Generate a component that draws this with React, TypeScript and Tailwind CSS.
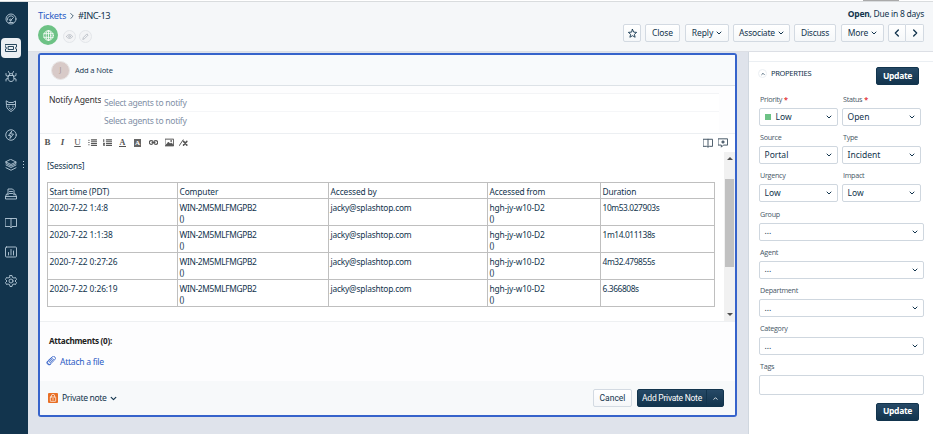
import React from "react";

type SvgProps = { children: React.ReactNode; className?: string; sw?: number };

function Ico({ children, className = "size-3", sw = 2 }: SvgProps) {
  return (
    <svg viewBox="0 0 24 24" fill="none" stroke="currentColor" strokeWidth={sw} strokeLinecap="round" strokeLinejoin="round" className={`block shrink-0 ${className}`}>
      {children}
    </svg>
  );
}

function Chevron({ className = "size-[7px]", up = false }: { className?: string; up?: boolean }) {
  return (
    <Ico className={className} sw={4}>
      <path d={up ? "M4 16l8-8 8 8" : "M4 8l8 8 8-8"} />
    </Ico>
  );
}

const navIcons: React.ReactNode[] = [
  <><circle cx="12" cy="12" r="10" /><path d="M5 14a7 7 0 0 1 11-7M12 14l5-5M11 16a2 2 0 1 0 0-4 2 2 0 0 0 0 4M8 19h8" /></>,
  <><path d="M1 5h22v5a2 2 0 0 0 0 4v5H1v-5a2 2 0 0 0 0-4z" /><path d="M7 9h10v6H7z" /></>,
  <><path d="M7 9h10l1 6c0 4-3 6-6 6s-6-2-6-6zM8 9a4 4 0 0 1 8 0M9 5L7 1M15 5l2-4M7 11L2 9V5M17 11l5-2V5M6 15l-4 1v4M18 15l4 1v4" /></>,
  <><path d="M3 2l5 3h8l5-3v10c0 5-4 8-9 11-5-3-9-6-9-11z" /><path d="M4 9h16M8 12v2M16 12v2M9 17l3 2 3-2" /></>,
  <><circle cx="12" cy="12" r="10.5" /><path d="M13 5l-6 8h4l-1 6 7-9h-5z" /></>,
  <><path d="M12 1l10 5-10 5L2 6z" /><path d="M2 12l10 5 10-5M2 17.500l10 5 10-5M2 6v3l10 5 10-5V6" /></>,
  <><path d="M6 14V2h9l3 3v9M9 7h6M9 11h6M6 12H3l-2 6v4h22v-4l-2-6h-3M1 17h22" /></>,
  <><path d="M1 3h22v16h-9l-2 3-2-3H1zM12 3v16" /></>,
  <><rect x="1" y="2" width="22" height="20" rx="2" /><path d="M7 18v-5M12 18V7M17 18v-8" /></>,
  <><path d="M10 1h4l1 4 3 1 3-1 2 4-3 3 3 3-2 4-3-1-3 1-1 4h-4l-1-4-3-1-3 1-2-4 3-3-3-3 2-4 3 1 3-1z" /><circle cx="12" cy="12" r="4" /></>,
];

function Sidebar() {
  return (
    <nav className="flex w-7 shrink-0 flex-col bg-[#12344d] pt-[2.500px] text-[#b8cbd9]">
      {navIcons.map((icon, i) => (
        <div key={i} className="flex h-[29.100px] w-full shrink-0 items-center pl-[1px]">
          <span className={i === 1 ? "flex size-5 items-center justify-center rounded-[4px] bg-[#ebeff3] text-[#12344d]" : "flex size-5 items-center justify-center"}>
            <Ico className="size-[12px]" sw={1.8}>{icon}</Ico>
          </span>
          {i === 5 && (
            <span className="ml-[2px] flex flex-col gap-[2px]">
              <i className="size-px bg-[#b8cbd9]" /><i className="size-px bg-[#b8cbd9]" /><i className="size-px bg-[#b8cbd9]" />
            </span>
          )}
        </div>
      ))}
    </nav>
  );
}

const btn = "flex h-[18px] shrink-0 items-center justify-center rounded-[2px] border border-[#d3dae2] bg-gradient-to-b from-white to-[#f5f7f9]";

function Header() {
  return (
    <header className="flex h-[50px] shrink-0 justify-between border-b border-[#dcdfe5] bg-[#f5f7f9] pl-[10px] pr-[9px]">
      <div>
        <div className="mt-[7.500px] flex h-3 items-center text-[9.300px]">
          <span className="tracking-[-0.280px] text-[#2c5cc5]">Tickets</span>
          <Ico className="ml-[3px] mr-[3px] size-[6px]" sw={3}><path d="M7 2l10 10L7 22" /></Ico>
          <span className="tracking-[-0.550px]">#INC-13</span>
        </div>
        <div className="mt-[3.500px] flex items-center">
          <span className="flex size-5 items-center justify-center rounded-full bg-[#6dc285] text-white">
            <Ico className="size-[11px]" sw={1.8}><circle cx="12" cy="12" r="10.500" /><ellipse cx="12" cy="12" rx="5" ry="10.500" /><path d="M12 1v22M2 8h20M2 16h20" /></Ico>
          </span>
          <span className="ml-[5px] mt-[2px] flex size-[13px] items-center justify-center rounded-full border border-[#e3e6ea] bg-[#f3f4f6] text-[#b9bec6]">
            <Ico className="size-[7px]" sw={3}><path d="M1 12q11-14 22 0-11 14-22 0z" /><circle cx="12" cy="12" r="3" /></Ico>
          </span>
          <span className="ml-[3px] mt-[2px] flex size-[13px] items-center justify-center rounded-full border border-[#e3e6ea] bg-[#f3f4f6] text-[#b9bec6]">
            <Ico className="size-[7px]" sw={3}><path d="M3 21l2-6L17 3l4 4L9 19z" /></Ico>
          </span>
        </div>
      </div>
      <div className="flex flex-col items-end">
        <div className="mt-[6px] h-3 text-[8.500px] leading-3 tracking-[-0.240px]"><b>Open</b>, Due in 8 days</div>
        <div className="mt-[4px] flex text-[8.500px] tracking-[-0.100px]">
          <span className={`${btn} w-[18px]`}>
            <Ico className="size-[9px]" sw={2.4}><path d="M12 1l3.200 7.300 7.800.7-6 5.200 2 7.800-7-4.200L5 22l2-7.800L1 9l7.800-.7z" /></Ico>
          </span>
          <span className={`${btn} ml-[4px] w-[35px]`}>Close</span>
          <span className={`${btn} ml-[5px] w-[44px] gap-[3px]`}>Reply<Chevron className="size-[6px]" /></span>
          <span className={`${btn} ml-[4px] w-[57px] gap-[3px] tracking-[-0.200px]`}>Associate<Chevron className="size-[6px]" /></span>
          <span className={`${btn} ml-[4px] w-[42px] tracking-[-0.300px]`}>Discuss</span>
          <span className={`${btn} ml-[5px] w-[43px] gap-[3px]`}>More<Chevron className="size-[6px]" /></span>
          <span className={`${btn} ml-[4px] w-[18px] rounded-r-none`}><Ico className="size-[8px]" sw={4}><path d="M16 3l-9 9 9 9" /></Ico></span>
          <span className={`${btn} w-[18px] rounded-l-none border-l-0`}><Ico className="size-[8px]" sw={4}><path d="M8 3l9 9-9 9" /></Ico></span>
        </div>
      </div>
    </header>
  );
}

const list = <path d="M9 5h14M9 10h14M9 15h14M9 20h14" />;

function Toolbar() {
  return (
    <div className="flex h-[19px] items-center border-t border-[#eceff2] bg-white pb-px text-[#555]">
      <div className="flex items-center font-['Liberation_Serif',serif] text-[9px] leading-none">
        <span className="w-[15px] text-center font-bold">B</span>
        <span className="w-[15px] text-center font-bold italic">I</span>
        <span className="w-[15px] text-center underline">U</span>
        <span className="flex w-[15px] justify-center"><Ico className="size-[9px]" sw={2.8}>{list}<path d="M2 6h1M2 12h1M2 18h1" /></Ico></span>
        <span className="flex w-[15px] justify-center"><Ico className="size-[9px]" sw={2.8}>{list}<path d="M2 4v5M1 14h3l-3 5h3" /></Ico></span>
        <span className="flex w-[15px] justify-center"><span className="border-b border-[#555] px-px text-[8px] leading-[7px] font-bold">A</span></span>
        <span className="flex w-[15px] justify-center"><span className="bg-[#666] px-px text-[7px] leading-[8px] font-bold text-white">A</span></span>
        <span className="flex w-[17px] justify-center"><Ico className="size-[9px]" sw={3}><circle cx="6" cy="12" r="5" /><circle cx="18" cy="12" r="5" /><path d="M8 12h8" /></Ico></span>
        <span className="flex w-[14px] justify-center"><Ico className="size-[9px]" sw={2.600}><rect x="1" y="3" width="22" height="18" /><path d="M3 19l6-8 5 5 3-3 5 6z" fill="currentColor" /><circle cx="16" cy="8" r="1" /></Ico></span>
        <span className="flex w-[15px] justify-center"><Ico className="size-[9px]" sw={2.6}><path d="M1 20L11 5" /><path d="M12 9l9 10M21 9l-9 10" strokeWidth="4" /></Ico></span>
      </div>
      <div className="ml-auto flex gap-[5px] pr-[7px] text-[#475867]">
        <Ico className="size-[10px]" sw={2.4}><path d="M1 3h22v17h-8l-3 2-3-2H1zM12 3v18" /></Ico>
        <Ico className="size-[10px]" sw={2.400}><path d="M1 2h22v15H13l-5 5v-5H1z" /><path d="M12 7v5M9.500 9.500h5" strokeWidth="3.500" /></Ico>
      </div>
    </div>
  );
}

const rows = [
  ["2020-7-22 1:4:8", "10m53.027903s"],
  ["2020-7-22 1:1:38", "1m14.011138s"],
  ["2020-7-22 0:27:26", "4m32.479855s"],
  ["2020-7-22 0:26:19", "6.366808s"],
];
const cell = "border border-[#bfbfbf] pl-[1.500px] pt-[2.500px] align-top";

function Editor() {
  return (
    <div className="flex h-[169px] bg-white">
      <div className="min-w-0 flex-1 pl-[7px] text-[8.400px] leading-[11px]">
        <div className="mt-[8px] tracking-[-0.200px]">[Sessions]</div>
        <table className="mt-[11px] w-[667px] table-fixed border-collapse">
          <colgroup>
            <col className="w-[130px]" /><col className="w-[151px]" /><col className="w-[159px]" /><col className="w-[113px]" /><col className="w-[114px]" />
          </colgroup>
          <tbody>
            <tr className="h-[16px]">
              {["Start time (PDT)", "Computer", "Accessed by", "Accessed from", "Duration"].map((h) => <td key={h} className={`${cell} tracking-[-0.120px]`}>{h}</td>)}
            </tr>
            {rows.map(([time, duration]) => (
              <tr key={time} className="h-[27px]">
                <td className={`${cell} tracking-[-0.100px]`}>{time}</td>
                <td className={`${cell} tracking-[-0.350px]`}>WIN-2M5MLFMGPB2<br />()</td>
                <td className={`${cell} tracking-[-0.200px]`}>jacky@splashtop.com</td>
                <td className={`${cell} tracking-[-0.150px]`}>hgh-jy-w10-D2<br />()</td>
                <td className={`${cell} tracking-[-0.400px]`}>{duration}</td>
              </tr>
            ))}
          </tbody>
        </table>
      </div>
      <div className="flex w-[11px] shrink-0 flex-col items-center bg-[#f1f1f1]">
        <i className="mt-[5px] border-x-[3px] border-b-[3px] border-x-transparent border-b-[#505050]" />
        <i className="mt-[19px] h-[88px] w-[9px] bg-[#c1c1c1]" />
        <i className="mt-auto mb-[5px] border-x-[3px] border-t-[3px] border-x-transparent border-t-[#505050]" />
      </div>
    </div>
  );
}

function NotePanel() {
  return (
    <section className="mt-[1px] ml-[10px] flex h-[364px] w-[699px] flex-col overflow-hidden rounded-[3px] border-2 border-[#3663cb] bg-[#fdfdfe]">
      <div className="flex h-[31px] shrink-0 items-center border-b border-[#dde2e7] bg-[#f8fafc] pl-[11px]">
        <span className="flex size-[19px] items-center justify-center rounded-full border border-[#e8e6e6] bg-[#d8cac8] text-[7px] text-[#a39392]">J</span>
        <span className="mt-[2px] ml-[5px] font-['Open_Sans','Noto_Sans',sans-serif] text-[7.600px] font-medium tracking-[-0.180px]">Add a Note</span>
      </div>
      <div className="flex h-[47px] shrink-0 pt-[7px] text-[8.600px]">
        <span className="w-[61px] shrink-0 pt-[1px] pl-[9px] tracking-[-0.180px] whitespace-nowrap text-[#333]">Notify Agents</span>
        <div className="mr-[16px] flex-1 border-t border-[#f3f4f6] bg-white pl-[3px] leading-[18px] tracking-[-0.300px] text-[#7f8fa6]">
          <div className="h-[18px] border-b border-[#f5f6f8]">Select agents to notify</div>
          <div>Select agents to notify</div>
        </div>
      </div>
      <Toolbar />
      <Editor />
      <div className="h-[60px] shrink-0 border-t border-[#eef0f2] pl-[7px]">
        <div className="mt-[13px] ml-[2px] text-[8.200px] leading-3 font-bold tracking-[-0.300px] text-[#222]">Attachments (0):</div>
        <div className="mt-[9px] flex h-3 items-center text-[8.600px] text-[#2c5cc5]">
          <Ico className="mt-[-3px] ml-[-1px] size-[10px]" sw={2}><path d="M13 5l-8 8a4 4 0 0 0 6 6L21 9a4 4 0 0 0-6-7L4 12a5 5 0 0 0 7 8M16 6l-8 8 2 2 8-8" /></Ico>
          <span className="ml-[4px] tracking-[-0.280px]">Attach a file</span>
        </div>
      </div>
      <div className="flex flex-1 items-center bg-[#f7f9fa] pr-[11px] pl-[8px] text-[8.600px]">
        <span className="flex size-[10px] items-center justify-center rounded-[1px] bg-[#e86f25] text-white">
          <Ico className="size-[8px]" sw={2}><rect x="4" y="9" width="16" height="13" rx="1" /><path d="M7 9V6a5 5 0 0 1 10 0v3M12 13v5" /></Ico>
        </span>
        <span className="ml-[4px] mr-[3px] tracking-[-0.350px]">Private note</span>
        <Chevron />
        <span className={`${btn} ml-auto w-[39px] font-[Roboto,sans-serif] text-[8.500px]`}>Cancel</span>
        <span className="ml-[5px] flex h-[18px] w-[87px] items-center rounded-[2px] border border-[#12344d] bg-gradient-to-b from-[#264966] to-[#12344d] font-[Roboto,sans-serif] text-[8.500px] text-white">
          <span className="flex h-full w-[69px] items-center justify-center border-r border-[#12344d] tracking-[-0.250px] whitespace-nowrap">Add Private Note</span>
          <span className="flex flex-1 justify-center"><Chevron up className="size-[5px]" /></span>
        </span>
      </div>
    </section>
  );
}

function Field({ label, value, required = false, dot = false, wide = false }: { label: string; value?: string; required?: boolean; dot?: boolean; wide?: boolean }) {
  return (
    <label className={`block h-[38.200px] ${wide ? "w-[165px]" : "w-[79px]"}`}>
      <span className="ml-[1px] block h-[13px] font-['Open_Sans','Noto_Sans',sans-serif] text-[7.200px] leading-[9px] tracking-[-0.280px] text-[#475867]">
        {label}{required && <span className="ml-[2px] font-bold text-[#e43538]">*</span>}
      </span>
      <span className={`flex items-center rounded-[2px] border border-[#cfd7df] bg-white pr-[5px] pl-[4.500px] text-[8.500px] ${value ? "h-[18px]" : "h-[20px]"}`}>
        {dot && <i className="mr-[5px] size-[6px] bg-[#6dc285]" />}
        {value}
        {value && <Chevron className="ml-auto size-[6px]" />}
      </span>
    </label>
  );
}

function UpdateButton() {
  return <span className="flex h-[18px] w-[43px] items-center justify-center rounded-[2px] border border-[#12344d] bg-gradient-to-b from-[#264966] to-[#12344d] text-[8.500px] font-bold tracking-[-0.300px] text-white">Update</span>;
}

function Properties() {
  return (
    <aside className="flex w-[185px] shrink-0 flex-col border-l border-[#d0d7df] bg-white">
      <div className="h-[10px] shrink-0 border-b border-[#ebeff3]" />
      <div className="mt-[4.500px] flex h-[19px] shrink-0 items-center pl-[9px]">
        <span className="mt-[-5px] flex size-[9px] items-center justify-center rounded-full border border-[#ebeff3]"><Chevron up className="size-[4px]" /></span>
        <span className="mt-[-5px] ml-[4px] text-[7.500px] tracking-[-0.320px]">PROPERTIES</span>
        <span className="ml-auto mr-[14px]"><UpdateButton /></span>
      </div>
      <div className="mt-[9.500px] flex w-[175px] flex-wrap gap-x-[4px] pl-[10px]">
        <Field label="Priority" value="Low" required dot />
        <Field label="Status" value="Open" required />
        <Field label="Source" value="Portal" />
        <Field label="Type" value="Incident" />
        <Field label="Urgency" value="Low" />
        <Field label="Impact" value="Low" />
        <Field label="Group" value="..." wide />
        <Field label="Agent" value="..." wide />
        <Field label="Department" value="..." wide />
        <Field label="Category" value="..." wide />
        <Field label="Tags" wide />
      </div>
      <div className="mt-[2px] mr-[14px] flex justify-end"><UpdateButton /></div>
    </aside>
  );
}

export default function App() {
  return (
    <div className="flex h-[435px] w-[933px] flex-col overflow-hidden bg-white font-['Noto_Sans',sans-serif] text-[#12344d]">
      <div className="flex h-[2px] shrink-0 justify-end border-b border-[#d9dcde] pr-[34px]"><i className="h-px w-[36px] bg-[#aaa]" /></div>
      <div className="flex h-[432px] shrink-0">
        <Sidebar />
        <main className="flex min-w-0 flex-1 flex-col">
          <Header />
          <div className="flex min-h-0 flex-1 justify-between bg-[#dfe3eb]">
            <NotePanel />
            <Properties />
          </div>
        </main>
      </div>
    </div>
  );
}
